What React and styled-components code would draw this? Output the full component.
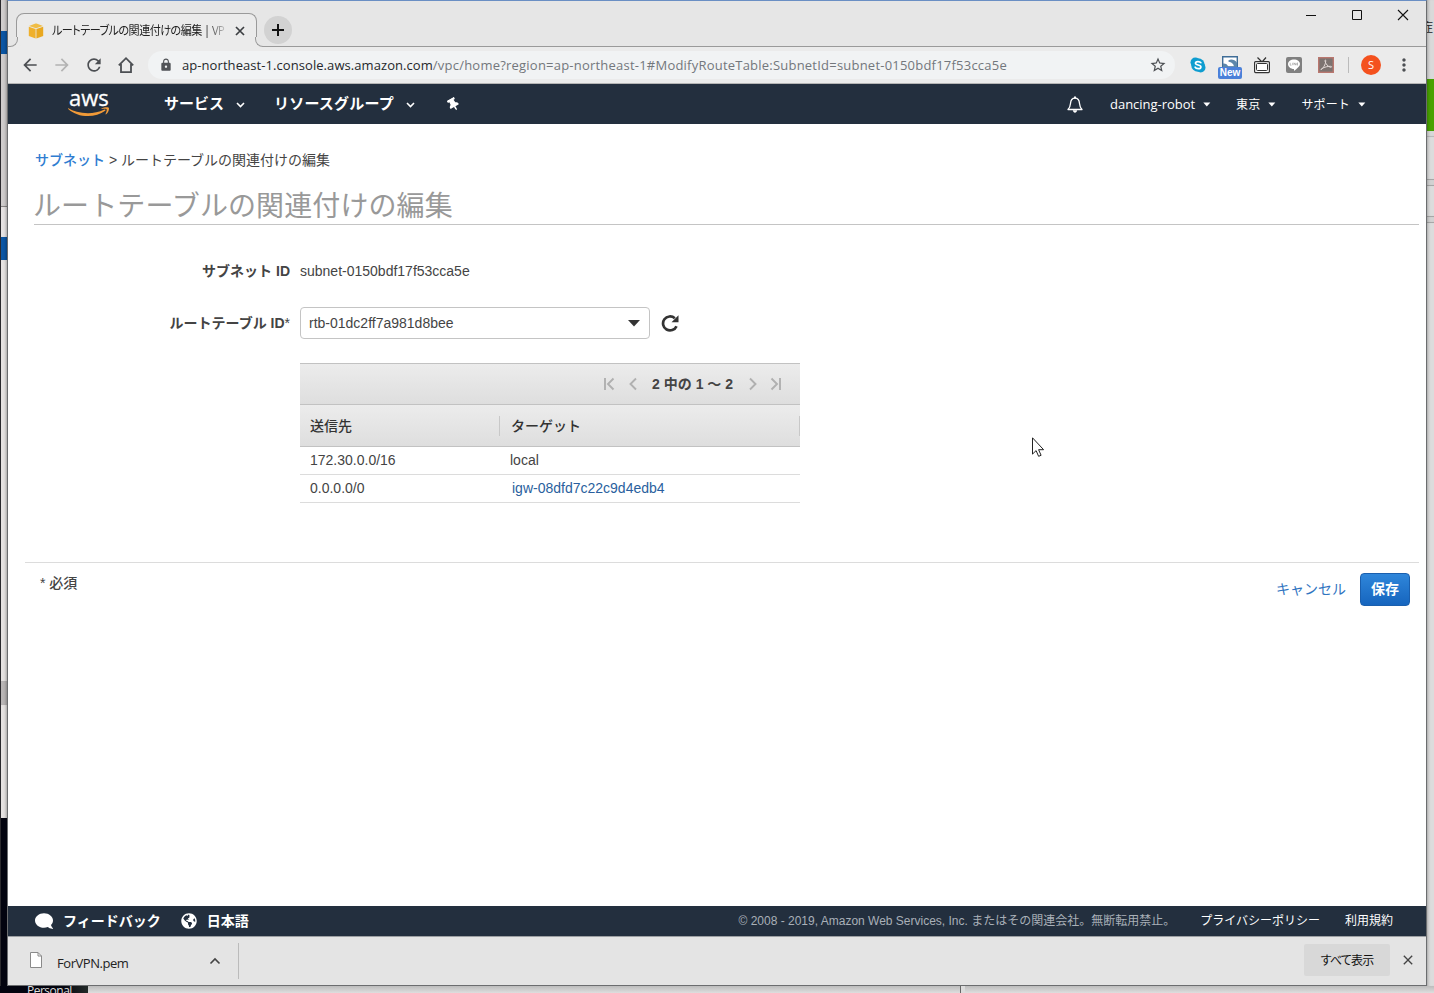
import React from "react";
import styled, { createGlobalStyle } from "styled-components";
import {
  MdArrowBack,
  MdArrowForward,
  MdRefresh,
  MdLock,
  MdStarBorder,
  MdMoreVert,
  MdClose,
} from "react-icons/md";
import { FaComment, FaGlobeAmericas, FaThumbtack } from "react-icons/fa";

const ROUTES = [
  { id: 1, destination: "172.30.0.0/16", target: "local" },
  { id: 2, destination: "0.0.0.0/0", target: "igw-08dfd7c22c9d4edb4", link: true },
];

const App = () => (
  <Desktop>
    <GlobalStyle />
    <LeftStrip>
      <Strip $h={31} $c="#d0cdcd" />
      <Strip $h={23} $c="#0b56a4" />
      <Strip $h={152} $c="#cfcccc" />
      <Strip $h={1} $c="#8b8888" />
      <Strip $h={30} $c="#e6e3e3" />
      <Strip $h={23} $c="#0b56a4" />
      <Strip $h={421} $c="#e6e3e2" />
      <Strip $h={24} $c="#b9b6b6" />
      <Strip $h={113} $c="#e6e3e2" />
      <Strip $h={168} $c="#03040f" $dark />
    </LeftStrip>
    <Window>
      <TabStrip>
        <Tab>
          <BoxIcon />
          <TabTitle>
            <span>ルートテーブルの関連付けの編集 | VP</span>
          </TabTitle>
          <CloseIcon />
        </Tab>
        <NewTab>
          <svg width="12" height="12" viewBox="0 0 12 12">
            <path d="M6 0v12M0 6h12" stroke="#111" strokeWidth="2" />
          </svg>
        </NewTab>
        <WindowButtons>
          <svg width="12" height="12" viewBox="0 0 12 12">
            <path d="M1 6.5h10" stroke="#111" />
          </svg>
          <svg width="12" height="12" viewBox="0 0 12 12">
            <path d="M1.5 1.5h9v9h-9z" fill="none" stroke="#111" />
          </svg>
          <svg width="12" height="12" viewBox="0 0 12 12">
            <path d="M1 1l10 10M11 1L1 11" stroke="#111" strokeWidth="1.1" />
          </svg>
        </WindowButtons>
      </TabStrip>
      <Toolbar>
        <NavIcons>
          <MdArrowBack size={20} />
          <MdArrowForward size={20} color="#b3b3b3" />
          <MdRefresh size={20} />
          <HomeIcon />
        </NavIcons>
        <AddressBar>
          <MdLock size={14} color="#505357" />
          <Url>
            ap-northeast-1.console.aws.amazon.com
            <span>/vpc/home?region=ap-northeast-1#ModifyRouteTable:SubnetId=subnet-0150bdf17f53cca5e</span>
          </Url>
          <MdStarBorder size={18} color="#4c4f53" />
        </AddressBar>
        <Extensions>
          <SkypeIcon />
          <NewExtension />
          <TvIcon />
          <LineIcon />
          <PdfIcon />
        </Extensions>
        <Divider />
        <Avatar>S</Avatar>
        <MdMoreVert size={20} color="#4c4f53" />
      </Toolbar>
      <AwsNav>
        <AwsLogo />
        <MainMenu>
          <MenuItem>
            <span>サービス</span>
            <Chevron />
          </MenuItem>
          <MenuItem $wide>
            <span>リソースグループ</span>
            <Chevron />
          </MenuItem>
          <Pin size={13} />
        </MainMenu>
        <AccountMenu>
          <BellIcon />
          <AccountItem $latin>
            dancing-robot
            <Caret />
          </AccountItem>
          <AccountItem>
            東京
            <Caret />
          </AccountItem>
          <AccountItem>
            サポート
            <Caret />
          </AccountItem>
        </AccountMenu>
      </AwsNav>
      <Page>
        <Breadcrumb>
          <a>サブネット</a> &gt; ルートテーブルの関連付けの編集
        </Breadcrumb>
        <Title>ルートテーブルの関連付けの編集</Title>
        <Form>
          <FormRow>
            <Label>サブネット ID</Label>
            <Value>subnet-0150bdf17f53cca5e</Value>
          </FormRow>
          <FormRow>
            <Label>
              ルートテーブル ID<Star>*</Star>
            </Label>
            <Select>
              rtb-01dc2ff7a981d8bee
              <svg width="12" height="7" viewBox="0 0 12 7">
                <path d="M0 0h12L6 6.500z" fill="#333" />
              </svg>
            </Select>
            <ReloadIcon />
          </FormRow>
        </Form>
        <Table>
          <Pager>
            <PagerIcon d="M3 1v12M11.500 1.500L6 7l5.500 5.500" />
            <PagerIcon d="M10 1.500L4.500 7l5.500 5.500" />
            <PagerText>2 中の 1 ～ 2</PagerText>
            <PagerIcon d="M5 1.500L10.500 7L5 12.500" />
            <PagerIcon d="M2.500 1.500L8 7l-5.500 5.500M11 1v12" />
          </Pager>
          <HeadRow>
            <HeadCell>送信先</HeadCell>
            <HeadCell $indent={11}>ターゲット</HeadCell>
          </HeadRow>
          {ROUTES.map((route) => (
            <Row key={route.id}>
              <Cell>{route.destination}</Cell>
              <Cell $link={route.link}>{route.target}</Cell>
            </Row>
          ))}
        </Table>
        <Actions>
          <Required>
            <Star>*</Star> 必須
          </Required>
          <Cancel>キャンセル</Cancel>
          <Save>保存</Save>
        </Actions>
        <Pointer />
      </Page>
      <Footer>
        <FooterItem>
          <FlippedComment size={18} />
          <span>フィードバック</span>
        </FooterItem>
        <FooterItem>
          <FaGlobeAmericas size={16} />
          <span>日本語</span>
        </FooterItem>
        <Copyright>
          © 2008 - 2019, Amazon Web Services, Inc. またはその関連会社。無断転用禁止。
        </Copyright>
        <FooterLink>プライバシーポリシー</FooterLink>
        <FooterLink>利用規約</FooterLink>
      </Footer>
      <DownloadBar>
        <Download>
          <svg width="14" height="18" viewBox="0 0 14 18">
            <path d="M1.500 .500h7.500l3.500 3.500v11.500h-11z" fill="#fff" stroke="#8a8a8a" />
            <path d="M9 .500v3.500h3.500" fill="none" stroke="#8a8a8a" />
          </svg>
          <FileName>ForVPN.pem</FileName>
          <svg width="12" height="8" viewBox="0 0 12 8">
            <path d="M1.500 6.500L6 2l4.500 4.500" fill="none" stroke="#444" strokeWidth="1.600" />
          </svg>
        </Download>
        <ShowAll>すべて表示</ShowAll>
        <DownloadClose>
          <MdClose size={16} />
        </DownloadClose>
      </DownloadBar>
    </Window>
    <RightStrip>
      <Strip $h={79} $c="#d9d9d9">
        <Clipped>症</Clipped>
      </Strip>
      <Strip $h={52} $c="#48a200" />
      <Strip $h={5} $c="#d8d8d8" />
      <Strip $h={1} $c="#bdbdbd" />
      <Strip $h={42} $c="#dcdcdc" />
      <Strip $h={1} $c="#aaa" />
      <Strip $h={5} $c="#d2d2d2" />
      <Strip $h={1} $c="#aaa" />
      <Strip $h={30} $c="#dcdcdc" />
      <Strip $h={1} $c="#aaa" />
      <Strip $h={5} $c="#d2d2d2" />
      <Strip $h={1} $c="#aaa" />
      <Strip $h={763} $c="#dcdcdc" />
    </RightStrip>
    <BottomStrip>
      <DesktopLabel>Personal</DesktopLabel>
      <BackWindow />
      <BackWindow $last />
    </BottomStrip>
  </Desktop>
);

const BoxIcon = () => (
  <svg width="16" height="16" viewBox="0 0 16 16">
    <path d="M1 3l6.500-2.500h1L15 3 8 5.200z" fill="#f0bd45" />
    <path d="M.8 3.800L7.600 6v9.600L.8 13z" fill="#efb02c" />
    <path d="M15.200 3.800L8.400 6v9.600l6.800-2.600z" fill="#e9a820" />
  </svg>
);

const CloseIcon = () => (
  <svg width="14" height="14" viewBox="0 0 14 14">
    <path d="M3 3l8 8M11 3l-8 8" stroke="#3c3f42" strokeWidth="1.700" />
  </svg>
);

const HomeIcon = () => (
  <svg width="20" height="20" viewBox="0 0 20 20">
    <path
      d="M2.800 10.300L10 3.200l7.200 7.100M5 9v8.200h10V9"
      fill="none"
      stroke="#4c4f53"
      strokeWidth="1.800"
    />
  </svg>
);

const SkypeIcon = () => (
  <svg width="16" height="16" viewBox="0 0 16 16">
    <circle cx="5.300" cy="5.300" r="4.800" fill="#0f9dd0" />
    <circle cx="10.700" cy="10.700" r="4.800" fill="#0f9dd0" />
    <circle cx="8" cy="8" r="6.800" fill="#0f9dd0" />
    <path
      d="M10.800 5.700C10 4.300 5.500 4 5.500 6.200c0 2.300 5.400 1.200 5.400 3.700 0 2.300-4.800 2.200-5.800.3"
      fill="none"
      stroke="#fff"
      strokeWidth="1.700"
      strokeLinecap="round"
    />
  </svg>
);

const NewExtension = () => (
  <ExtensionSlot>
    <svg width="18" height="12" viewBox="0 0 18 12">
      <path d="M1.700 .700h14.600v10.300H1.700z" fill="#fff" stroke="#3f6d97" strokeWidth="1.400" />
      <path d="M7.500 4.200c3-1.400 6.500-.4 8.500 2.600v4.200h-3c0-3-2.500-4.800-5.500-5.200z" fill="#5d87ab" />
      <path d="M2 7.500c2.500-.2 4.500.8 5.500 3.500H2z" fill="#5d87ab" />
    </svg>
    <NewBadge>New</NewBadge>
  </ExtensionSlot>
);

const TvIcon = () => (
  <svg width="16" height="17" viewBox="0 0 16 17">
    <path d="M3.500 .500L7.500 4.500M12 .500L8.500 4.500" fill="none" stroke="#333" strokeWidth="1.200" />
    <rect x=".600" y="4.600" width="14.800" height="11" rx="1" fill="#fff" stroke="#333" strokeWidth="1.200" />
    <rect x="2.500" y="6.500" width="11" height="7" rx="1" fill="none" stroke="#333" />
  </svg>
);

const LineIcon = () => (
  <svg width="16" height="16" viewBox="0 0 16 16">
    <rect width="16" height="16" rx="2" fill="#808080" />
    <path d="M8 2.500c3.300 0 6 2 6 4.600 0 2.400-2.800 4.300-5.600 6.600-.4.200-.5-.2-.4-1.600-3.300 0-6-2.300-6-5s2.700-4.600 6-4.600z" fill="#fff" />
    <path d="M4.200 5.800v2.400h1.300M6.700 5.800v2.400M8 8.200V5.800l1.800 2.400V5.800M12 6h-1v2h1M11 7h1" fill="none" stroke="#909090" strokeWidth=".6" />
  </svg>
);

const PdfIcon = () => (
  <svg width="16" height="16" viewBox="0 0 16 16">
    <rect x=".7" y=".7" width="14.600" height="14.600" fill="#7c7370" stroke="#b9776f" strokeWidth="1.400" />
    <path
      d="M3 12.700c1.500-.5 5-5.500 4.700-9.200 0-.8-1-.6-.7.500.6 3 3 5.700 5.700 6.300 1.200.2 1.200-1 0-1-3 0-6 .7-8.700 2.200-.8.500-1.600 1.400-1 1.200z"
      fill="none"
      stroke="#e2d9d6"
    />
  </svg>
);

const AwsLogo = () => (
  <Logo>
    <LogoText>aws</LogoText>
    <svg width="42" height="10" viewBox="0 0 42 10">
      <path d="M.5 1.300C8 5.800 23 9 36.500 2.600c1-.3 1.500.5.700 1.100C27 11.500 9.500 10.700.2 1.900c-.3-.5 0-.8.300-.6z" fill="#f19a38" />
      <path d="M33.500 1.500C36 .2 39.800 0 40.800.8c.7 1-.3 5-2.600 6.500-.5.300-.8 0-.6-.5.800-1.700 1.500-3.800 1-4.500s-3-.5-4.700-.3c-.6 0-.8-.2-.4-.5z" fill="#f19a38" />
    </svg>
  </Logo>
);

const BellIcon = () => (
  <svg width="16" height="17" viewBox="0 0 16 17">
    <path
      d="M1 13.500c2-2 2.300-3.600 2.500-6C3.700 4.500 5.300 2.200 8 2.200s4.300 2.300 4.500 5.300c.2 2.400.5 4 2.500 6z"
      fill="none"
      stroke="#fff"
      strokeWidth="1.300"
      strokeLinejoin="round"
    />
    <path d="M7 .5h2v2H7zM5.800 14.300h4.400c-.3 1.600-1.100 2.400-2.200 2.400s-1.900-.8-2.200-2.400z" fill="#fff" />
  </svg>
);

const Chevron = () => (
  <svg width="9" height="6" viewBox="0 0 9 6">
    <path d="M1 1l3.500 3.500L8 1" fill="none" stroke="#fff" strokeWidth="1.600" />
  </svg>
);

const Caret = () => (
  <svg width="8" height="5" viewBox="0 0 8 5">
    <path d="M.3.600h7L3.800 4.500z" fill="#fff" />
  </svg>
);

const ReloadIcon = () => (
  <svg width="18" height="18" viewBox="0 0 18 18">
    <path d="M15.500 12.200A7 7 0 1 1 13.800 4.300" fill="none" stroke="#333" strokeWidth="2.700" />
    <path d="M17.500 1.200v7h-7z" fill="#333" />
  </svg>
);

const PagerIcon = ({ d }) => (
  <svg width="14" height="14" viewBox="0 0 14 14">
    <path d={d} fill="none" stroke="#b0b0b0" strokeWidth="1.900" />
  </svg>
);

const Pointer = () => (
  <PointerLayer>
    <svg width="13" height="21" viewBox="0 0 13 21">
      <path d="M.5.800v16.300l3.600-3.500 2.500 5.700 2.500-1-2.500-5.600h5z" fill="#fff" stroke="#222" />
    </svg>
  </PointerLayer>
);

export default App;

const GlobalStyle = createGlobalStyle`
  * {
    box-sizing: border-box;
  }
  body {
    margin: 0;
    overflow: hidden;
    font-family: "Liberation Sans", "Noto Sans CJK JP", sans-serif;
    font-size: 14px;
    color: #444;
    white-space: nowrap;
  }
  svg {
    display: block;
    flex-shrink: 0;
  }
`;

const Desktop = styled.div`
  display: grid;
  grid-template-columns: 7px 1420px 7px;
  grid-template-rows: 986px 7px;
  width: 1434px;
  height: 993px;
  overflow: hidden;
  background: #dcdcdc;
`;

const LeftStrip = styled.div`
  display: flex;
  flex-direction: column;
`;

const RightStrip = styled(LeftStrip)`
  overflow: hidden;
`;

const Strip = styled.div`
  height: ${(p) => p.$h}px;
  background: ${(p) => p.$c};
  box-shadow: ${(p) => (p.$dark ? "none" : "inset -3px 0 3px -2px rgba(0, 0, 0, 0.3)")};
  ${LeftStrip}:first-of-type > & {
    border-left: 1px solid #2b2a2e;
  }
  ${RightStrip} > & {
    box-shadow: inset 3px 0 3px -2px rgba(0, 0, 0, 0.25);
  }
`;

const Clipped = styled.div`
  padding-top: 18px;
  margin-left: -6px;
  font: 12px/18px "Noto Sans CJK JP", sans-serif;
  color: #222;
`;

const BottomStrip = styled.div`
  grid-column: 1 / -1;
  display: flex;
  overflow: hidden;
`;

const DesktopLabel = styled.div`
  width: 88px;
  padding-left: 27px;
  background: linear-gradient(90deg, #03040f 70%, #232a28);
  color: #ddd;
  font: 12px/9px "Open Sans", sans-serif;
  letter-spacing: -0.5px;
`;

const BackWindow = styled.div`
  width: ${(p) => (p.$last ? "auto" : "873px")};
  flex: ${(p) => (p.$last ? 1 : "none")};
  background: linear-gradient(#bcbcbc, #dedede);
  border-right: ${(p) => (p.$last ? "none" : "1px solid #666")};
  margin-right: ${(p) => (p.$last ? 0 : 4)}px;
`;

const Window = styled.div`
  display: flex;
  flex-direction: column;
  border: 1px solid #6b6d6f;
  border-top-color: #6a8fc4;
  background: #fff;
`;

const TabStrip = styled.div`
  display: flex;
  height: 46px;
  padding: 12px 0 0 8px;
  background: #e6e6e6;
  border-bottom: 1px solid #9a9a9a;
`;

const Tab = styled.div`
  position: relative;
  display: flex;
  align-items: center;
  width: 241px;
  height: 34px;
  padding: 0 9px 0 11px;
  background: #ebebeb;
  border: 1px solid #9a9a9a;
  border-bottom: none;
  border-radius: 8px 8px 0 0;
  &::before,
  &::after {
    content: "";
    position: absolute;
    bottom: 0;
    width: 9px;
    height: 9px;
    border-bottom: 1px solid #9a9a9a;
    background: #e6e6e6;
  }
  &::before {
    left: -9px;
    border-right: 1px solid #9a9a9a;
    border-bottom-right-radius: 8px;
    box-shadow: 3px 3px 0 #ebebeb;
  }
  &::after {
    right: -9px;
    border-left: 1px solid #9a9a9a;
    border-bottom-left-radius: 8px;
    box-shadow: -3px 3px 0 #ebebeb;
  }
`;

const TabTitle = styled.div`
  width: 178px;
  margin: 0 3px 0 8px;
  font: 12px/18px "Open Sans", "Noto Sans CJK JP", sans-serif;
  font-feature-settings: "palt";
  letter-spacing: -0.6px;
  color: #222;
  mask-image: linear-gradient(90deg, #000 155px, transparent 177px);
  span {
    display: inline-block;
    transform: scaleX(0.925);
    transform-origin: left;
  }
`;

const NewTab = styled.div`
  display: flex;
  align-items: center;
  justify-content: center;
  width: 28px;
  height: 28px;
  margin: 3px 0 0 7px;
  border-radius: 50%;
  background: #d2d2d2;
`;

const WindowButtons = styled.div`
  display: flex;
  gap: 34px;
  margin: -4px 17px 0 auto;
`;

const Toolbar = styled.div`
  display: flex;
  align-items: center;
  height: 37px;
  padding: 0 12px 0 12px;
  background: #ebebeb;
  border-bottom: 1px solid #b5b5b5;
`;

const NavIcons = styled.div`
  display: flex;
  gap: 12px;
  color: #4c4f53;
`;

const AddressBar = styled.div`
  display: flex;
  align-items: center;
  width: 1029px;
  height: 28px;
  margin-left: 12px;
  padding: 0 8px 0 11px;
  border-radius: 14px;
  background: #f1f3f4;
`;

const Url = styled.div`
  flex: 1;
  margin-left: 9px;
  font: 13px/20px "Open Sans", sans-serif;
  letter-spacing: 0.07px;
  color: #25282b;
  span {
    letter-spacing: 0.22px;
    color: #73777c;
  }
`;

const Extensions = styled.div`
  display: flex;
  align-items: center;
  gap: 16px;
  margin-left: 15px;
`;

const ExtensionSlot = styled.div`
  position: relative;
  width: 16px;
  height: 16px;
  svg {
    margin: -1px -1px 0;
  }
`;

const NewBadge = styled.div`
  position: absolute;
  left: -4px;
  top: 10px;
  width: 24px;
  height: 12px;
  border-radius: 2px;
  background: #4a80d9;
  color: #fff;
  font: bold 10px/12px "Liberation Sans", sans-serif;
  text-align: center;
`;

const Divider = styled.div`
  width: 1px;
  height: 16px;
  margin: 0 12px 0 14px;
  background: #bbb;
`;

const Avatar = styled.div`
  width: 20px;
  height: 20px;
  margin-right: 13px;
  border-radius: 50%;
  background: #f4511e;
  color: #fff;
  font: 11px/20px "Open Sans", sans-serif;
  text-align: center;
`;

const AwsNav = styled.div`
  display: flex;
  align-items: center;
  height: 40px;
  background: #232f3e;
  color: #fff;
  font-family: "Open Sans", "Noto Sans CJK JP", sans-serif;
`;

const Logo = styled.div`
  width: 42px;
  margin-left: 60px;
`;

const LogoText = styled.div`
  height: 16px;
  padding-left: 1px;
  font: 500 22px/12px "Open Sans", sans-serif;
  -webkit-text-stroke: 0.3px #fff;
`;

const MainMenu = styled.div`
  display: flex;
  align-items: center;
  gap: 29px;
  margin-left: 54px;
`;

const MenuItem = styled.div`
  display: flex;
  align-items: center;
  gap: 12px;
  font-size: 15px;
  font-weight: 700;
  letter-spacing: ${(p) => (p.$wide ? "0.2px" : "0")};
  span {
    margin-top: -3px;
  }
  svg {
    margin-top: 2px;
  }
`;

const Pin = styled(FaThumbtack)`
  margin-left: 3px;
  transform: rotate(-30deg);
`;

const AccountMenu = styled.div`
  display: flex;
  align-items: center;
  gap: 25px;
  margin: 0 60px 0 auto;
  > svg {
    margin-right: 2px;
  }
`;

const AccountItem = styled.div`
  display: flex;
  align-items: center;
  gap: 8px;
  font-size: ${(p) => (p.$latin ? 13 : 12)}px;
  letter-spacing: ${(p) => (p.$latin ? "-0.03px" : "0.15px")};
`;

const Page = styled.div`
  position: relative;
  height: 782px;
`;

const Breadcrumb = styled.div`
  padding: 26px 0 0 27px;
  line-height: 20px;
  a {
    color: #2f7dd1;
    font-weight: 500;
  }
`;

const Title = styled.div`
  height: 49px;
  margin: 6px 7px 0 26px;
  padding-top: 8px;
  border-bottom: 1px solid #c4c4c4;
  font: 400 28px/40px "Noto Sans CJK JP", sans-serif;
  letter-spacing: 0.1px;
  text-indent: -1px;
  color: #999;
`;

const Form = styled.div`
  display: flex;
  flex-direction: column;
  gap: 20px;
  padding-top: 30px;
`;

const FormRow = styled.div`
  display: flex;
  align-items: center;
  height: 32px;
`;

const Label = styled.div`
  width: 282px;
  margin: -2px 10px 0 0;
  font-weight: bold;
  text-align: right;
`;

const Star = styled.span`
  font-weight: normal;
`;

const Value = styled.div`
  color: #444;
`;

const Select = styled.div`
  display: flex;
  align-items: center;
  justify-content: space-between;
  width: 350px;
  height: 32px;
  margin-right: 11px;
  padding: 0 9px 0 8px;
  border: 1px solid #c4c4c4;
  border-radius: 4px;
`;

const Table = styled.div`
  width: 500px;
  margin: 24px 0 0 292px;
`;

const Pager = styled.div`
  display: flex;
  align-items: center;
  justify-content: flex-end;
  gap: 10px;
  height: 42px;
  padding-right: 17px;
  border-top: 1px solid #c2c2c2;
  border-bottom: 1px solid #c2c2c2;
  background: linear-gradient(#ececec, #dedede);
`;

const PagerText = styled.div`
  margin: -2px 2px 0;
  font-weight: bold;
`;

const HeadRow = styled.div`
  display: grid;
  grid-template-columns: 200px 300px;
  align-items: center;
  height: 42px;
  border-bottom: 1px solid #c2c2c2;
  background: linear-gradient(#ececec, #dedede);
`;

const HeadCell = styled.div`
  padding-left: ${(p) => p.$indent || 10}px;
  border-right: 1px solid #c8c8c8;
  font-weight: 500;
  line-height: 20px;
  color: #333;
`;

const Row = styled.div`
  display: grid;
  grid-template-columns: 200px 300px;
  height: 28px;
  border-bottom: 1px solid #dcdcdc;
  line-height: 27px;
`;

const Cell = styled.div`
  padding-left: ${(p) => (p.$link ? 12 : 10)}px;
  color: ${(p) => (p.$link ? "#2a5f9e" : "#444")};
`;

const Actions = styled.div`
  display: flex;
  margin: 59px 7px 0 17px;
  padding: 10px 9px 0 15px;
  border-top: 1px solid #dcdcdc;
`;

const Required = styled.div`
  flex: 1;
  font-weight: 500;
  line-height: 20px;
`;

const Cancel = styled.div`
  margin-right: 14px;
  line-height: 32px;
  color: #2f74bf;
`;

const Save = styled.div`
  width: 50px;
  height: 33px;
  border: 1px solid #1a5fae;
  border-radius: 4px;
  background: linear-gradient(#2f86da, #1665be);
  color: #fff;
  font-weight: bold;
  line-height: 30px;
  text-align: center;
`;

const PointerLayer = styled.div`
  position: absolute;
  left: 1024px;
  top: 313px;
`;

const Footer = styled.div`
  display: flex;
  align-items: center;
  height: 30px;
  padding: 0 33px 0 27px;
  background: #232f3e;
  color: #fff;
`;

const FooterItem = styled.div`
  display: flex;
  align-items: center;
  gap: 10px;
  margin-right: 20px;
  font-weight: bold;
  span {
    margin-top: -3px;
  }
`;

const FlippedComment = styled(FaComment)`
  transform: scaleX(-1);
`;

const Copyright = styled.div`
  margin: -3px 0 0 auto;
  font-size: 12px;
  color: #a9b0b8;
`;

const FooterLink = styled.div`
  margin: -3px 0 0 25px;
  font-size: 12px;
`;

const DownloadBar = styled.div`
  display: flex;
  align-items: center;
  flex: 1;
  border-top: 1px solid #9c9fa2;
  padding-right: 10px;
  background: #e4e4e4;
`;

const Download = styled.div`
  display: flex;
  align-items: center;
  width: 231px;
  height: 36px;
  padding: 0 17px 0 21px;
  border-right: 1px solid #bbb;
`;

const FileName = styled.div`
  flex: 1;
  padding: 4px 0 0 14px;
  font: 13px/18px "Open Sans", sans-serif;
  letter-spacing: -0.45px;
  color: #222;
`;

const ShowAll = styled.div`
  width: 86px;
  margin: -2px 10px 0 auto;
  border-radius: 2px;
  background: #d8d8d8;
  color: #111;
  font: 12px/32px "Noto Sans CJK JP", sans-serif;
  font-feature-settings: "palt";
  letter-spacing: -0.8px;
  text-align: center;
`;

const DownloadClose = styled.div`
  margin-top: -2px;
  color: #444;
  svg {
    stroke: #444;
  }
`;
